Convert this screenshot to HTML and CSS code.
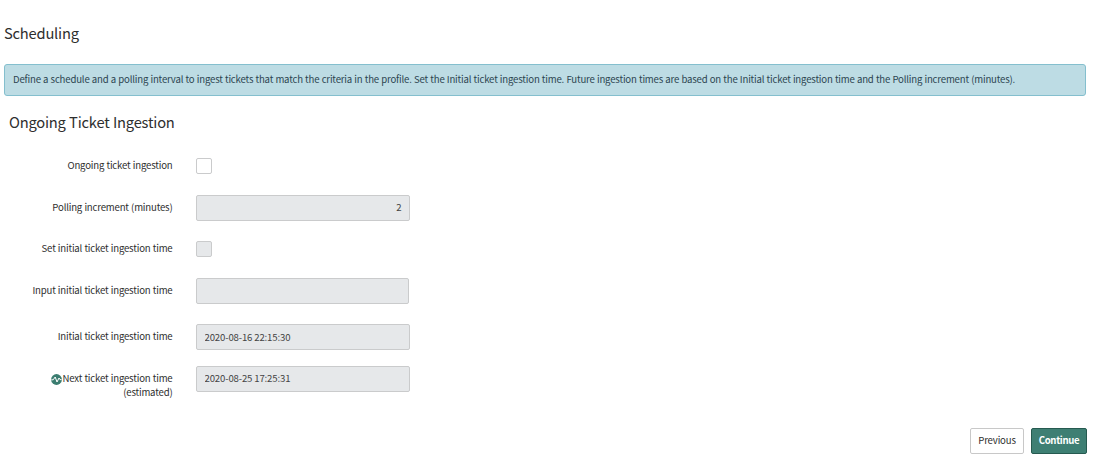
FILE: index.html
```
<!DOCTYPE html>
<html lang="en">
<head>
    <meta charset="UTF-8">
    <meta name="viewport" content="width=device-width, initial-scale=1.0">
    <title>Scheduling</title>
    <link rel="stylesheet" href="styles.css">
</head>
<body>
    <h2>Scheduling</h2>
    <div class="alert">Define a schedule and a polling interval to ingest tickets that match the criteria in the profile. Set the Initial ticket ingestion time. Future ingestion times are based on the Initial ticket ingestion time and the Polling increment (minutes).</div>

    <form class="schedule">
        <h3>Ongoing Ticket Ingestion</h3>
        <div class="row">
            <label for="ongoing">Ongoing ticket ingestion</label>
            <input type="checkbox" id="ongoing">
        </div>
        <div class="row">
            <label for="polling">Polling increment (minutes)</label>
            <input type="text" id="polling" class="number" value="2" disabled>
        </div>
        <div class="row">
            <label for="setInitial">Set initial ticket ingestion time</label>
            <input type="checkbox" id="setInitial" disabled>
        </div>
        <div class="row date-row">
            <label for="inputInitial">Input initial ticket ingestion time</label>
            <input type="text" id="inputInitial" class="date" disabled>
        </div>
        <div class="row">
            <label for="initial">Initial ticket ingestion time</label>
            <input type="text" id="initial" value="2020-08-16 22:15:30" disabled>
        </div>
        <div class="row">
            <label for="next"><svg class="activity" viewBox="0 0 11 11"><circle cx="5.5" cy="5.5" r="5.4"/><path d="M0.3 5.8H2.2L4.2 3L6 8L8 4L9 5.6H10.6"/></svg>Next ticket ingestion time<br>(estimated)</label>
            <input type="text" id="next" class="next" value="2020-08-25 17:25:31" disabled>
        </div>
    </form>

    <div class="buttons">
        <button type="button">Previous</button>
        <button type="button" class="primary">Continue</button>
    </div>
</body>
</html>
```
FILE: styles.css
```
body {
    font-family: "Noto Sans CJK SC", "Noto Sans", sans-serif;
    font-size: 9.6px;
    line-height: 14px;
    letter-spacing: -0.173px;
    word-spacing: 0.3px;
    color: #2e2e2e;
    margin: 0;
    padding: 23px 10px 0 4px;
    background-color: #fff;
}
h2, h3 {
    font-size: 14.7px;
    line-height: 20px;
    letter-spacing: -0.2px;
    font-weight: normal;
    margin: 0;
}
.alert {
    box-sizing: border-box;
    height: 32px;
    margin-top: 21px;
    padding: 7px 8px;
    background-color: #bddce4;
    border: 1px solid #84bfce;
    border-radius: 3px;
    color: #2c4450;
    white-space: nowrap;
}
.schedule {
    height: 292px;
}
h3 {
    margin: 16px 0 21px 5px;
}
.row {
    display: flex;
    align-items: flex-start;
    height: 26px;
    margin-bottom: 15.7px;
}
.date-row {
    margin-bottom: 20px;
}
label {
    width: 168.5px;
    margin-right: 23.5px;
    padding-top: 5px;
    text-align: right;
    white-space: nowrap;
}
input {
    box-sizing: border-box;
    width: 214px;
    height: 26px;
    margin: 0;
    padding: 0 7.5px 1px;
    font: inherit;
    letter-spacing: -0.15px;
    color: #444;
    background-color: #fff;
    border: 1px solid #cacbcc;
    border-radius: 2px;
}
input:disabled {
    background-color: #e6e8ea;
}
input[type="checkbox"] {
    appearance: none;
    width: 16px;
    height: 16px;
    margin-top: 5px;
    padding: 0;
}
.number {
    text-align: right;
}
.number, .next {
    padding-bottom: 2px;
}
.date {
    width: 213px;
}
.activity {
    width: 11px;
    height: 11px;
    margin-right: 1px;
    vertical-align: -3px;
}
.activity circle {
    fill: #3b7d70;
}
.activity path {
    fill: none;
    stroke: #fff;
    stroke-width: 1;
}
.buttons {
    display: flex;
    justify-content: flex-end;
    gap: 7px;
    margin: 24px -1px 0 0;
}
button {
    box-sizing: border-box;
    width: 54px;
    height: 26px;
    padding: 0 0 2px;
    font: inherit;
    letter-spacing: -0.17px;
    color: #2e2e2e;
    background-color: #fff;
    border: 1px solid #c8c8c8;
    border-radius: 2px;
}
button.primary {
    width: 56px;
    font-weight: bold;
    letter-spacing: -0.35px;
    color: #fff;
    background-color: #3e7f73;
    border-color: #265a50;
}
```
